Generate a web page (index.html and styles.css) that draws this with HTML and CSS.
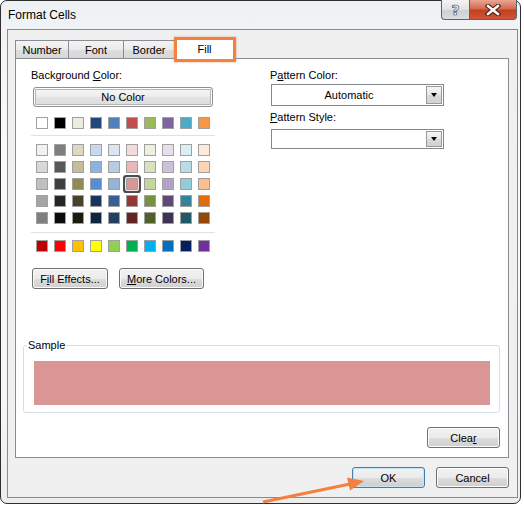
FILE: index.html
```html
<!DOCTYPE html>
<html lang="en">
<head>
    <meta charset="UTF-8">
    <title>Format Cells</title>
    <link rel="stylesheet" href="styles.css">
</head>
<body>
    <div class="window">
        <div class="titlebar">
            <span class="title">Format Cells</span>
            <div class="caption-buttons">
                <span class="cap-btn help">?</span>
                <span class="cap-btn close">
                    <svg width="16" height="12" viewBox="0 0 16 12">
                        <path d="M3 2 L13 10 M13 2 L3 10" stroke="#4a2014" stroke-width="4.6" stroke-linecap="square"/>
                        <path d="M3 2 L13 10 M13 2 L3 10" stroke="#fff" stroke-width="2.4" stroke-linecap="square"/>
                    </svg>
                </span>
            </div>
        </div>

        <div class="client">
            <!-- Tabs -->
            <div class="tabs">
                <div class="tab tab-number">Number</div>
                <div class="tab tab-font">Font</div>
                <div class="tab tab-border">Border</div>
                <div class="tab tab-fill active">Fill<span class="highlight"></span></div>
            </div>

            <div class="panel">
                <div class="panel-top">
                    <div class="col-left">
                        <div class="label">Background <u>C</u>olor:</div>
                        <button class="btn no-color">No Color</button>
                        <div class="swatch-row base" id="rowBase"></div>
                        <div class="separator"></div>
                        <div class="tint-rows" id="rowTints"></div>
                        <div class="separator second"></div>
                        <div class="swatch-row standard" id="rowStandard"></div>
                        <div class="color-buttons">
                            <button class="btn fill-effects">F<u>i</u>ll Effects...</button>
                            <button class="btn more-colors"><u>M</u>ore Colors...</button>
                        </div>
                    </div>
                    <div class="col-right">
                        <div class="label">P<u>a</u>ttern Color:</div>
                        <div class="dropdown first">
                            <span class="dropdown-value">Automatic</span>
                            <span class="dropdown-arrow"></span>
                        </div>
                        <div class="label second"><u>P</u>attern Style:</div>
                        <div class="dropdown second">
                            <span class="dropdown-value"></span>
                            <span class="dropdown-arrow"></span>
                        </div>
                    </div>
                </div>

                <fieldset class="sample">
                    <legend>Sample</legend>
                    <div class="sample-fill"></div>
                </fieldset>

                <div class="clear-row">
                    <button class="btn clear">Clea<u>r</u></button>
                </div>
            </div>

            <div class="dialog-buttons">
                <button class="btn default">OK</button>
                <button class="btn cancel">Cancel</button>
            </div>
        </div>
    </div>

    <!-- pointer arrow drawn over the dialog -->
    <svg class="pointer" width="524" height="505" viewBox="0 0 524 505">
        <line x1="263" y1="502" x2="350" y2="484" stroke="#f47f3e" stroke-width="3"/>
        <polygon points="364,481 347,477.5 350,490.5" fill="#f47f3e"/>
    </svg>

    <script>
        // Excel 2010 theme palette
        const baseColors = ['#FFFFFF', '#000000', '#EEECE1', '#1F497D', '#4F81BD', '#C0504D', '#9BBB59', '#8064A2', '#4BACC6', '#F79646'];
        const tintColors = [
            ['#F2F2F2', '#7F7F7F', '#DDD9C3', '#C6D9F0', '#DBE5F1', '#F2DCDB', '#EBF1DD', '#E5E0EC', '#DBEEF3', '#FDEADA'],
            ['#D8D8D8', '#595959', '#C4BD97', '#8DB3E2', '#B8CCE4', '#E5B9B7', '#D7E3BC', '#CCC1D9', '#B7DDE8', '#FBD5B5'],
            ['#BFBFBF', '#3F3F3F', '#938953', '#548DD4', '#95B3D7', '#D99694', '#C3D69B', '#B2A2C7', '#92CDDC', '#FAC08F'],
            ['#A5A5A5', '#262626', '#494429', '#17365D', '#366092', '#953734', '#76923C', '#5F497A', '#31859B', '#E36C09'],
            ['#7F7F7F', '#0C0C0C', '#1D1B10', '#0F243E', '#244061', '#632423', '#4F6128', '#3F3151', '#205867', '#974806']
        ];
        const standardColors = ['#C00000', '#FF0000', '#FFC000', '#FFFF00', '#92D050', '#00B050', '#00B0F0', '#0070C0', '#002060', '#7030A0'];
        const selected = '#D99694';

        function fillRow(row, colors) {
            colors.forEach(function(color) {
                const swatch = document.createElement('span');
                swatch.className = 'swatch' + (color === selected ? ' selected' : '');
                swatch.style.background = color;
                row.appendChild(swatch);
            });
        }

        fillRow(document.getElementById('rowBase'), baseColors);
        tintColors.forEach(function(colors) {
            const row = document.createElement('div');
            row.className = 'swatch-row';
            fillRow(row, colors);
            document.getElementById('rowTints').appendChild(row);
        });
        fillRow(document.getElementById('rowStandard'), standardColors);
    </script>
</body>
</html>
```

FILE: styles.css
```css
* {
    box-sizing: border-box;
}
body {
    margin: 0;
    background: #fff;
    font-family: "Liberation Sans", Arial, sans-serif;
    font-size: 11px;
    color: #000;
}
u {
    text-decoration: underline;
}

/* Window frame */
.window {
    width: 521px;
    height: 504px;
    border: 1px solid #2e2e2e;
    border-radius: 7px;
    background: linear-gradient(#eef1f4, #fafafa 30%, #f6f6f6 80%, #ececec);
    padding: 0 2px 5px 6px;
    display: flex;
    flex-direction: column;
}
.titlebar {
    height: 28px;
    display: flex;
    align-items: flex-start;
}
.title {
    font-size: 12px;
    margin: 7px 0 0 1px;
}
.caption-buttons {
    margin-left: auto;
    margin-right: 1px;
    margin-top: -1px;
    display: flex;
}
.cap-btn {
    height: 20px;
    border: 1px solid #5a6270;
    border-top: none;
    display: flex;
    align-items: center;
    justify-content: center;
}
.help {
    width: 28px;
    border-right: none;
    border-radius: 0 0 0 4px;
    background: linear-gradient(#f4f4f4, #e2e2e2 50%, #cdd0d4 51%, #dadcde);
    font-family: "DejaVu Sans", sans-serif;
    font-weight: bold;
    font-size: 14px;
    color: #fafafa;
    -webkit-text-stroke: 0.7px #4a4f57;
}
.close {
    width: 48px;
    border-radius: 0 0 4px 0;
    background: linear-gradient(#e9a793, #d66a4f 45%, #c2401f 55%, #d0563a);
}

/* Client area */
.client {
    flex: 1;
    border: 1px solid #8a8a8a;
    background: #f0f0f0;
    padding: 8px 8px 0 7px;
    display: flex;
    flex-direction: column;
}
.tabs {
    height: 20px;
    display: flex;
    align-items: flex-end;
    position: relative;
    z-index: 1;
}
.tab {
    height: 18px;
    border: 1px solid #898c95;
    border-bottom: none;
    margin-right: -1px;
    background: linear-gradient(#f4f4f4, #ebebeb 50%, #dddddd 51%, #d8d8d8);
    display: flex;
    align-items: center;
    justify-content: center;
    padding-top: 1px;
}
.tab-number {
    width: 54px;
}
.tab-font {
    width: 56px;
}
.tab-border {
    width: 52px;
}
.tab-fill {
    width: 59px;
    margin-left: 1px;
}
.tab.active {
    height: 21px;
    margin-bottom: -1px;
    background: #fff;
    position: relative;
    padding-bottom: 2px;
}
.highlight {
    position: absolute;
    left: -2px;
    top: -2px;
    right: -3px;
    bottom: -3px;
    border: 3px solid #f4823f;
    box-shadow: 0 0 2px rgba(200, 90, 30, 0.5);
}

/* Fill panel */
.panel {
    height: 400px;
    border: 1px solid #898c95;
    background: #fff;
    padding: 0 8px 0 7px;
}
.panel-top {
    display: grid;
    grid-template-columns: 247px 1fr;
    padding-top: 9px;
}
.col-left {
    padding-left: 8px;
}
.label {
    height: 15px;
    line-height: 15px;
}
.btn {
    height: 21px;
    border: 1px solid #707070;
    border-radius: 3px;
    background: linear-gradient(#f2f2f2, #ebebeb 50%, #dddddd 51%, #cfcfcf);
    box-shadow: inset 0 0 0 1px #fbfbfb;
    font: inherit;
    color: #000;
    padding: 0;
}
.no-color {
    display: block;
    width: 180px;
    height: 20px;
    margin: 4px 0 0 2px;
    border-color: #8e8f8f;
    background: linear-gradient(#f8f8f8, #ececec 50%, #e3e3e3 51%, #dcdcdc);
    box-shadow: inset 0 0 0 1px #fff, inset 0 0 0 2px #b5b5b5;
}
.swatch-row {
    display: flex;
    gap: 6px;
    padding-left: 5px;
}
.swatch-row.base {
    margin-top: 10px;
}
.tint-rows {
    margin-top: 8px;
    display: flex;
    flex-direction: column;
    gap: 5px;
}
.swatch-row.standard {
    margin-top: 7px;
}
.swatch {
    width: 12px;
    height: 12px;
    border: 1px solid #a0a0a0;
}
.swatch.selected {
    border-radius: 1px;
    box-shadow: 0 0 0 1px #e8e8e8, 0 0 0 3px #4e4e4e;
}
.separator {
    width: 184px;
    height: 1px;
    margin-top: 6px;
    background: #dfe1e6;
}
.separator.second {
    margin-top: 8px;
}
.color-buttons {
    display: flex;
    gap: 11px;
    margin: 16px 0 0 1px;
}
.fill-effects {
    width: 76px;
}
.more-colors {
    width: 85px;
}
.col-right {
    padding-left: 0;
}
.label.second {
    margin-top: 4px;
}
.dropdown {
    width: 173px;
    height: 22px;
    margin: 1px 0 0 1px;
    border: 1px solid #828790;
    background: #fff;
    display: flex;
    align-items: center;
    padding: 0 1px 0 0;
}
.dropdown.second {
    height: 20px;
    margin-top: 4px;
}
.dropdown-value {
    flex: 1;
    text-align: center;
}
.dropdown-arrow {
    width: 16px;
    height: calc(100% - 2px);
    border: 1px solid #9a9a9a;
    background: linear-gradient(#f5f5f5, #e6e6e6 50%, #d9d9d9 51%, #d2d2d2);
    display: flex;
    align-items: center;
    justify-content: center;
}
.dropdown-arrow::after {
    content: "";
    border-left: 3.5px solid transparent;
    border-right: 3.5px solid transparent;
    border-top: 4px solid #000;
}

/* Sample */
.sample {
    margin: 49px 0 0 0;
    border: 1px solid #d5dfe5;
    border-radius: 3px;
    padding: 0 9px 7px 10px;
    min-width: 0;
}
.sample legend {
    height: 15px;
    line-height: 15px;
    padding: 0 1px;
    margin-left: -7px;
}
.sample-fill {
    height: 44px;
    margin-top: 8px;
    background: #da9694;
}
.clear-row {
    display: flex;
    justify-content: flex-end;
    margin-top: 14px;
}
.clear {
    width: 73px;
}

/* OK / Cancel */
.dialog-buttons {
    display: flex;
    justify-content: flex-end;
    gap: 11px;
    margin-top: 9px;
}
.dialog-buttons .btn {
    width: 73px;
}
.btn.default {
    border-color: #3c7fb1;
    box-shadow: inset 0 0 0 1px #c4e5f6;
}

.pointer {
    position: absolute;
    left: 0;
    top: 0;
    pointer-events: none;
}
```
